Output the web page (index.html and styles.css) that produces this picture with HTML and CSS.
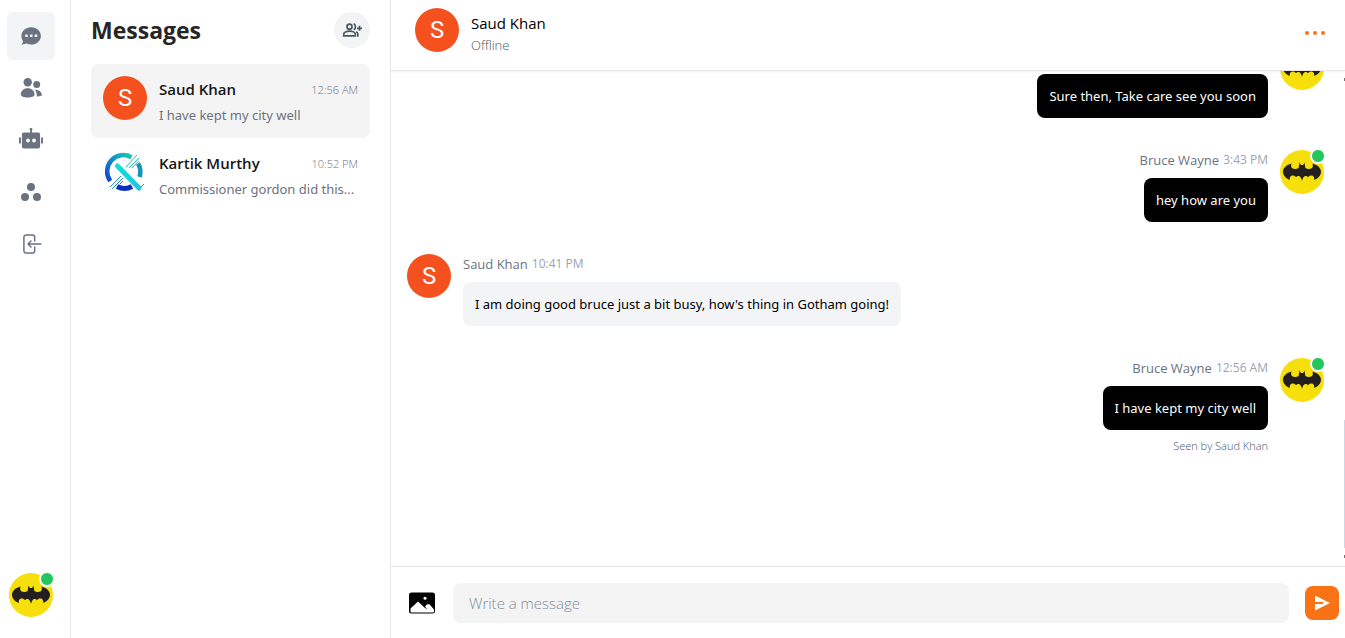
FILE: index.html
```html
<!DOCTYPE html>
<html lang="en">
<head>
<meta charset="utf-8">
<meta name="viewport" content="width=device-width, initial-scale=1">
<title>Messages</title>
<link rel="stylesheet" href="styles.css">
</head>
<body>
<svg class="defs" aria-hidden="true">
  <symbol id="bat" viewBox="0 0 44 44">
    <circle cx="22" cy="22" r="22" fill="#f6df0b"/>
    <path fill="#231f20" transform="translate(0 -2.300) scale(1 1.120)" d="M11.500 14C6 15.300 3 18.300 3 21.500c0 3.300 2.600 5.800 6.700 7.300-.3-2.600 .9-4 2.900-4 1.500 0 2.600 .5 3.400 1.600 .8-1 1.600-1.300 2.500-1.200 1.500 .1 2.700 1.300 3.500 4.300 .8-3 2-4.200 3.500-4.300 .9-.1 1.700 .2 2.500 1.200 .8-1.100 1.900-1.600 3.400-1.600 2 0 3.200 1.400 2.900 4 4.100-1.500 6.700-4 6.700-7.300 0-3.200-3-6.200-8.500-7.500 .8 2.200 .4 4.300-2.300 4.800-2.200 .4-4.300 .2-4.900-.8l-.8-4.700-1.300 2.200h-2.400l-1.300-2.200-.8 4.700c-.6 1-2.700 1.200-4.900 .8-2.700-.5-3.100-2.600-2.300-4.800z"/>
  </symbol>
</svg>
<div class="app">
  <nav class="rail" aria-label="Main">
    <div class="rail-items">
      <a class="rail-link active" href="#chats" aria-label="Chats"><svg viewBox="0 0 24 24"><path fill="currentColor" fill-rule="evenodd" d="M12.200 3.300c5.400 0 9.700 3.900 9.700 8.700s-4.300 8.600-9.700 8.600c-1.600 0-3.200-.4-4.600-1L2.400 20.800l1.900-3.400c-1.200-1.500-1.900-3.400-1.900-5.400 0-4.800 4.400-8.700 9.800-8.700zM6.300 10.600v2.500h2.500v-2.500zm4.700 0v2.500h2.500v-2.500zm4.700 0v2.500h2.500v-2.500z"/></svg></a>
      <a class="rail-link" href="#users" aria-label="Users"><svg viewBox="0 0 24 24"><g fill="currentColor"><circle cx="8.700" cy="6.300" r="4.200"/><circle cx="17.700" cy="8.600" r="3.500"/><path d="M1.800 18.500c0-3.700 3-6.300 6.900-6.300s6.900 2.600 6.900 6.300c0 1.700-3 3.100-6.900 3.100s-6.900-1.400-6.900-3.100z"/><path d="M15.900 13.700c4 0 6.900 2.100 7 5.700-1.500.7-3.200 1.100-5.100 1.100 .1-2.800-.5-4.700-1.900-6.800z"/></g></svg></a>
      <a class="rail-link" href="#bots" aria-label="Bots"><svg viewBox="0 0 24 24"><path fill="currentColor" fill-rule="evenodd" d="M11.100 4.500V2.400a1.400 1.400 0 1 1 1.800 0v2.100h6.200a2 2 0 0 1 2 2v12.100a2 2 0 0 1-2 2H4.900a2 2 0 0 1-2-2V6.500a2 2 0 0 1 2-2zM0 9.500h1.900v6H0zm22.100 0H24v6h-1.900zM9 10.600a1.900 1.900 0 1 0 0 3.800 1.900 1.900 0 0 0 0-3.800zm6 0a1.900 1.900 0 1 0 0 3.800 1.900 1.900 0 0 0 0-3.800z"/></svg></a>
      <a class="rail-link" href="#groups" aria-label="Groups"><svg viewBox="0 0 24 24"><g fill="currentColor"><circle cx="12" cy="7" r="4"/><circle cx="6" cy="17" r="4"/><circle cx="18" cy="17" r="4"/></g></svg></a>
      <button class="rail-link" type="button" aria-label="Log out"><svg viewBox="0 0 24 24"><path fill="none" stroke="currentColor" stroke-width="1.500" stroke-linecap="round" stroke-linejoin="round" d="M15.700 9V5.200a2.300 2.300 0 0 0-2.300-2.300H7.200a2.300 2.300 0 0 0-2.300 2.300v13.600a2.300 2.300 0 0 0 2.300 2.300h6.200a2.300 2.300 0 0 0 2.300-2.300V15M12 9l-3 3 3 3M9 12h12.800"/></svg></button>
    </div>
    <button class="avatar profile" type="button" aria-label="Profile"><svg><use href="#bat"/></svg><span class="online"></span></button>
  </nav>

  <aside class="panel">
    <header class="panel-head">
      <h1>Messages</h1>
      <button class="add" type="button" aria-label="New group"><svg viewBox="0 0 24 24"><g fill="none" stroke="currentColor" stroke-width="2"><circle cx="9" cy="8" r="3"/><path d="M2 19v-2c0-2.200 3.500-3.600 7-3.600s7 1.400 7 3.600v2z"/><path d="M14 4.500c2.700.6 2.700 6.400 0 7M17 14.100c1.700.8 2 1.600 2 3V20M21 7v6M18 10h6"/></g></svg></button>
    </header>
    <a class="chat selected" href="#saud">
      <span class="avatar letter">S</span>
      <span class="chat-text">
        <span class="chat-top"><span class="chat-name">Saud Khan</span><span class="chat-time">12:56 AM</span></span>
        <span class="preview">I have kept my city well</span>
      </span>
    </a>
    <a class="chat" href="#kartik">
      <span class="avatar"><svg viewBox="0 0 44 44">
        <defs>
          <linearGradient id="ring" x1="1" y1="0" x2="0" y2="1"><stop stop-color="#16cdb2"/><stop offset=".45" stop-color="#1292c5"/><stop offset="1" stop-color="#1143cf"/></linearGradient>
          <linearGradient id="bar" x1="0" y1="0" x2="1" y2="1"><stop stop-color="#17dcd3"/><stop offset="1" stop-color="#22c4dc"/></linearGradient>
        </defs>
        <g fill="none" stroke-width="4.500">
          <path stroke="url(#ring)" d="M7.300 31A16.300 16.300 0 0 1 28.500 7.200"/>
          <path stroke="#1495bd" d="M35 13.500A16.300 16.300 0 0 1 36.500 27"/>
          <path stroke="#102fb8" stroke-width="5" d="M14 36.500A16.300 16.300 0 0 0 29 36.500"/>
        </g>
        <path stroke="url(#bar)" stroke-width="5" stroke-linecap="round" d="M14.500 16 36 38"/>
        <g stroke="#25cbbb" stroke-width="1"><path d="M23 17 34 5M26 18 36 8M29 18l7-7"/></g>
        <g stroke="#258bd0" stroke-width="1"><path d="M7 37 18 26M9 39l11-11M17 34l3-3M38 37l3-3"/></g>
      </svg></span>
      <span class="chat-text">
        <span class="chat-top"><span class="chat-name">Kartik Murthy</span><span class="chat-time">10:52 PM</span></span>
        <span class="preview">Commissioner gordon did this...</span>
      </span>
    </a>
  </aside>

  <main class="conversation">
    <header class="conv-head">
      <span class="avatar letter">S</span>
      <div class="conv-who"><h2>Saud Khan</h2><p>Offline</p></div>
      <button class="more" type="button" aria-label="More"><svg viewBox="0 0 32 32"><g fill="currentColor"><circle cx="8" cy="16" r="2"/><circle cx="16" cy="16" r="2"/><circle cx="24" cy="16" r="2"/></g></svg></button>
    </header>

    <section class="log" aria-label="Conversation">
      <article class="msg own">
        <span class="avatar"><svg><use href="#bat"/></svg></span>
        <div class="msg-body"><p class="meta"></p><p class="bubble">Sure then, Take care see you soon</p></div>
      </article>
      <article class="msg own">
        <span class="avatar"><svg><use href="#bat"/></svg><span class="online"></span></span>
        <div class="msg-body"><p class="meta">Bruce Wayne <time>3:43 PM</time></p><p class="bubble">hey how are you</p></div>
      </article>
      <article class="msg">
        <span class="avatar letter">S</span>
        <div class="msg-body"><p class="meta">Saud Khan <time>10:41 PM</time></p><p class="bubble">I am doing good bruce just a bit busy, how's thing in Gotham going!</p></div>
      </article>
      <article class="msg own">
        <span class="avatar"><svg><use href="#bat"/></svg><span class="online"></span></span>
        <div class="msg-body"><p class="meta">Bruce Wayne <time>12:56 AM</time></p><p class="bubble">I have kept my city well</p><p class="seen">Seen by Saud Khan</p></div>
      </article>
      <span class="arrow up" aria-hidden="true"></span>
      <span class="thumb" aria-hidden="true"></span>
      <span class="arrow down" aria-hidden="true"></span>
    </section>

    <form class="composer">
      <button class="image" type="button" aria-label="Send an image"><svg viewBox="0 0 30 30"><rect x="2" y="4.500" width="26" height="21" rx="2.500"/><path fill="#fff" d="M3.500 20.500 11 13.500l6.500 6 1.800-2.500 1-.8h2.200l4.500 5.300v1.800a1.200 1.200 0 0 1-1.200 1.200H4.700a1.200 1.200 0 0 1-1.200-1.200z"/><path stroke="#000" stroke-width="1" d="m17 18.500 2.500 2"/><circle cx="18" cy="10.300" r="1.500" fill="#fff"/></svg></button>
      <input type="text" placeholder="Write a message" aria-label="Write a message">
      <button class="send" type="submit" aria-label="Send"><svg viewBox="0 0 18 18"><path fill="#fff" d="M2 1.500 17 9 2 16.500V10h8V8H2z"/></svg></button>
    </form>
  </main>
</div>
</body>
</html>
```
FILE: styles.css
```css
* { box-sizing: border-box; }
body { margin: 0; background: #fff; color: #000; font: 14px/20px "Open Sans", "Noto Sans", sans-serif; }
h1, h2, p { margin: 0; }
a { color: inherit; text-decoration: none; }
button { border: 0; padding: 0; background: none; color: inherit; font: inherit; cursor: pointer; }
svg { display: block; }
.defs { position: absolute; width: 0; height: 0; }

.app { display: flex; height: 100vh; }

.rail { flex: none; width: 71px; border-right: 1px solid #e5e7eb; padding: 12px 7px 21px; display: flex; flex-direction: column; justify-content: space-between; }
.rail-items { display: flex; flex-direction: column; gap: 4px; }
.rail-link { display: grid; place-items: center; width: 48px; height: 48px; border-radius: 6px; color: #6b7280; }
.rail-link svg { width: 24px; height: 24px; }
.rail-link.active { background: #f3f4f6; }
.profile { margin-left: 2px; }

.avatar { position: relative; flex: none; display: block; width: 44px; height: 44px; }
.avatar svg { width: 44px; height: 44px; }
.letter { display: grid; place-items: center; border-radius: 50%; background: #f4511e; color: #fff; font: 24px/44px Roboto, sans-serif; }
.online { position: absolute; top: -1px; right: -1px; width: 14px; height: 14px; border-radius: 50%; background: #22c55e; border: 1px solid #fff; box-shadow: 0 0 0 1px #fff; }

.panel { flex: none; width: 320px; border-right: 1px solid #e5e7eb; padding: 12px 20px; }
.panel-head { display: flex; align-items: center; justify-content: space-between; margin-bottom: 16px; }
h1 { font-size: 23px; line-height: 32px; font-weight: 700; color: #262626; }
.add { display: grid; place-items: center; width: 36px; height: 36px; border-radius: 50%; background: #f3f4f6; color: #4b5563; }
.add svg { width: 20px; height: 20px; }

.chat { display: flex; gap: 12px; padding: 12px; border-radius: 8px; }
.chat.selected { background: #f4f4f4; }
.chat-text { flex: 1; min-width: 0; display: flex; flex-direction: column; gap: 2px; padding-bottom: 1px; }
.chat-top { display: flex; justify-content: space-between; align-items: center; line-height: 27px; }
.chat-name { font-size: 15px; font-weight: 600; color: #171717; }
.chat-time { font-size: 11px; font-weight: 300; color: #6b7280; }
.preview { font-family: "Noto Sans", sans-serif; font-size: 13px; color: #6b7280; white-space: nowrap; }

.conversation { flex: 1; min-width: 0; display: flex; flex-direction: column; }
.conv-head { position: relative; z-index: 1; display: flex; align-items: center; gap: 12px; height: 71px; padding: 0 14px 11px 24px; border-bottom: 1px solid #e5e7eb; background: #fff; box-shadow: 0 1px 2px rgba(0, 0, 0, .05); }
.conv-who { flex: 1; display: flex; flex-direction: column; gap: 1px; padding-top: 7px; }
h2 { font-size: 15px; line-height: 22px; font-weight: 400; }
.conv-who p { font-size: 13px; font-weight: 300; color: #4b5563; }
.more { color: #f97316; padding-top: 6px; }
.more svg { width: 32px; height: 32px; }

.log { position: relative; flex: 1; min-height: 0; overflow: hidden; display: flex; flex-direction: column; justify-content: flex-end; padding: 0 5px 96px 0; }
.msg { flex: none; display: flex; gap: 12px; padding: 16px; }
.own { flex-direction: row-reverse; }
.msg-body { display: flex; flex-direction: column; align-items: flex-start; gap: 8px; }
.own .msg-body { align-items: flex-end; }
.meta { display: flex; align-items: center; gap: 4px; min-height: 20px; font-size: 13px; color: #6b7280; }
.meta time { font-size: 12px; color: #9ca3af; }
.bubble { padding: 12px; border-radius: 8px; background: #f3f4f6; font-family: "Noto Sans", sans-serif; font-size: 13px; }
.own .bubble { background: #000; color: #fff; }
.seen { font-size: 11px; line-height: 16px; font-weight: 300; color: #4b5563; }
.thumb { position: absolute; right: 0; bottom: 18px; width: 1px; height: 128px; background: #cbd9e4; }
.arrow { position: absolute; right: 0; width: 1px; height: 3px; background: #737373; }
.arrow.up { top: 7px; }
.arrow.down { bottom: 8px; }

.composer { display: flex; align-items: center; gap: 16px; padding: 16px 6px 15px 16px; border-top: 1px solid #e5e7eb; }
.image svg { width: 30px; height: 30px; }
.composer input { flex: 1; min-width: 0; height: 40px; border: 0; border-radius: 8px; padding: 0 16px; background: #f4f4f4; font: 300 15px/24px "Open Sans", "Noto Sans", sans-serif; outline-color: #f97316; }
.composer input::placeholder { color: #858c99; opacity: 1; }
.send { display: grid; place-items: center; width: 34px; height: 34px; border-radius: 8px; background: #f97316; }
.send svg { width: 18px; height: 18px; }
```
